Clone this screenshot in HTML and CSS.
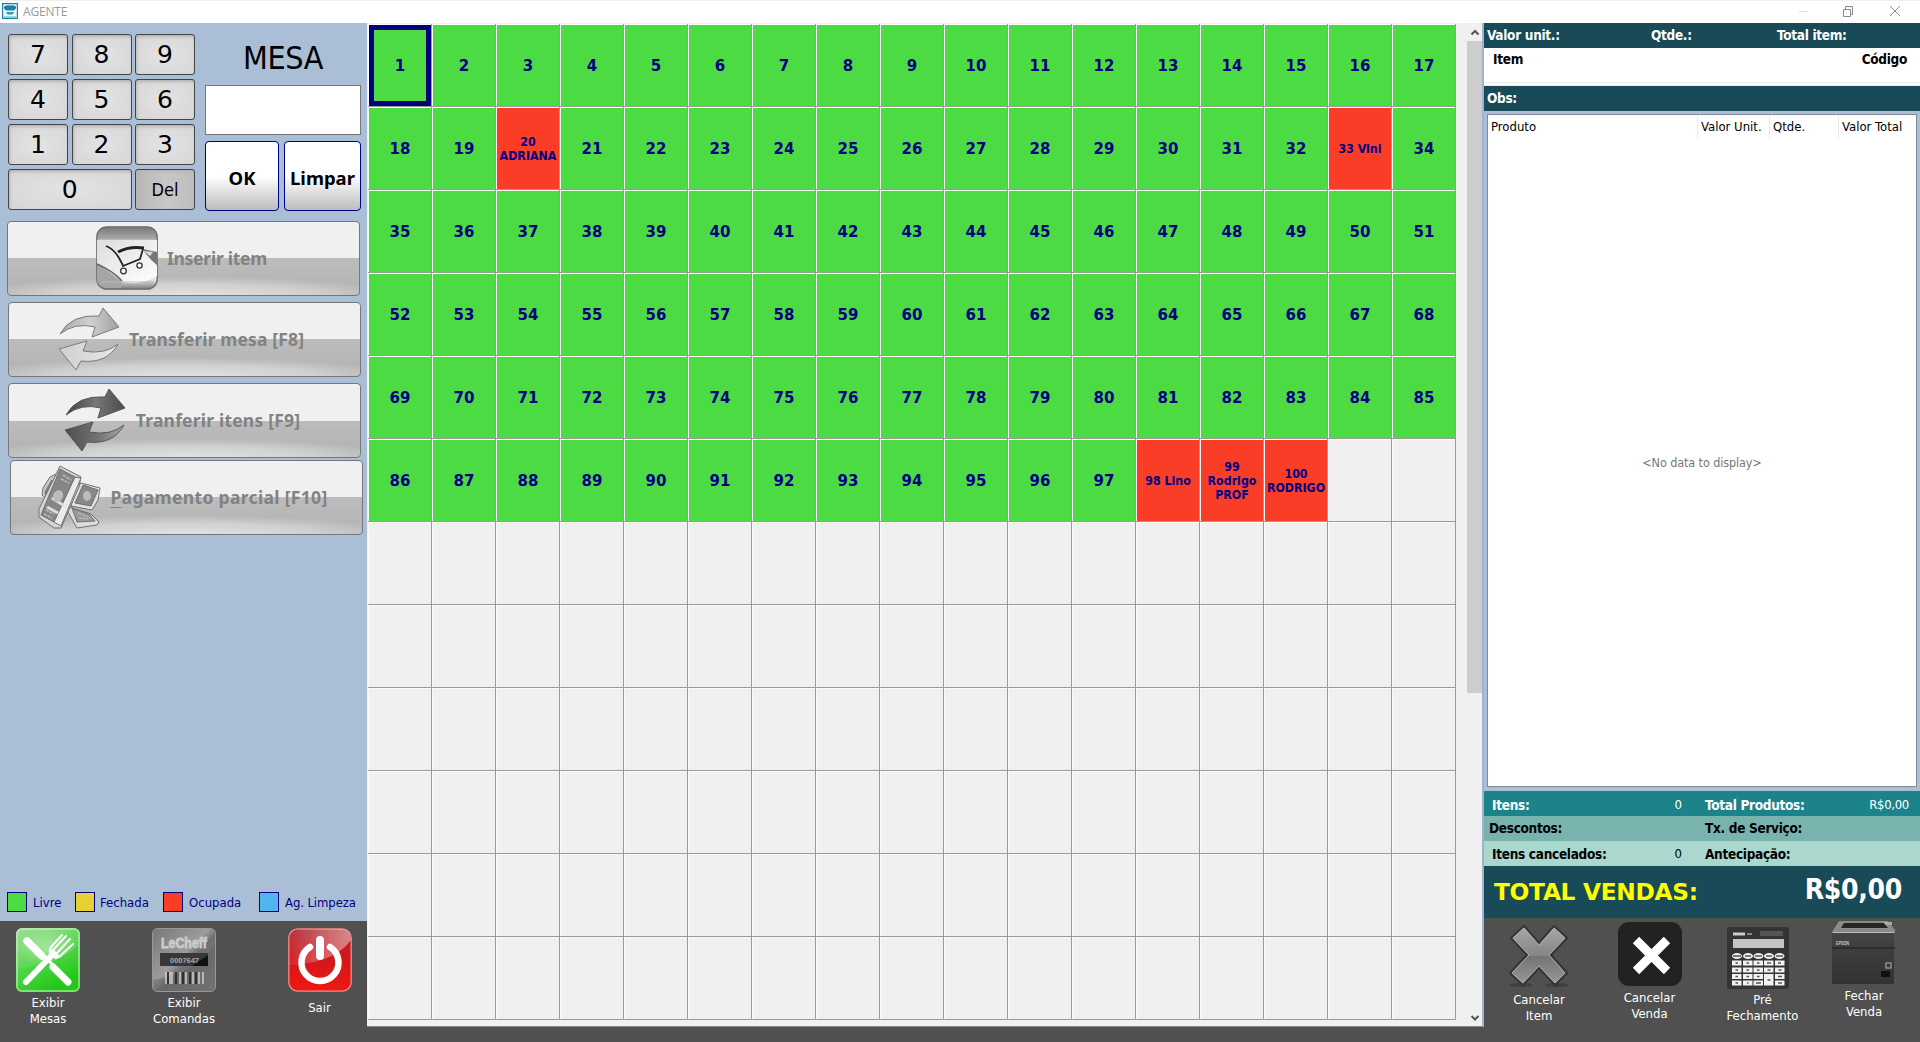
FILE: index.html
```html
<!DOCTYPE html>
<html lang="pt-BR">
<head>
<meta charset="utf-8">
<title>AGENTE</title>
<link rel="stylesheet" href="styles.css">
</head>
<body>
<header class="titlebar">
  <svg class="app-icon" width="16" height="16" viewBox="0 0 16 16"><rect x="0.5" y="0.5" width="15" height="15" fill="#e9f7fa" stroke="#1d83a3" stroke-width="1.4"/><path d="M2 3.5Q5 1.8 8 2.6Q11 1.8 14 3.5Q14.5 6 11.5 7.5H4.5Q1.500 6 2 3.500Z" fill="#1583a6"/><path d="M4 9h8l-1.500 2.500h-5z" fill="#3b96b2"/><path d="M2 14h12" stroke="#55b6cb"/></svg>
  <span class="app-name">AGENTE</span>
  <svg class="win-controls" width="110" height="14" viewBox="0 0 110 14" fill="none" stroke="#8a8a8a"><path d="M0 7.500h9" stroke="#e2e2e2"/><path d="M44.500 5.500h7v7h-7zM46.500 5.500v-3h7v8h-2"/><path d="M91 2l10 10M101 2l-10 10"/></svg>
</header>
<main class="workspace">
  <aside class="left">
    <section class="entry">
      <div class="keypad">
        <button class="key">7</button><button class="key">8</button><button class="key">9</button>
        <button class="key">4</button><button class="key">5</button><button class="key">6</button>
        <button class="key">1</button><button class="key">2</button><button class="key">3</button>
        <button class="key wide">0</button><button class="key del">Del</button>
      </div>
      <div class="mesa">
        <div class="mesa-title">MESA</div>
        <div class="mesa-input"></div>
        <div class="mesa-actions"><button class="act">OK</button><button class="act">Limpar</button></div>
      </div>
    </section>
    <nav class="commands">
      <button class="cmd c1">
        <svg width="62" height="64" viewBox="0 0 62 64"><defs><linearGradient id="cg" x2="0" y2="1"><stop offset="0" stop-color="#777"/><stop offset=".2" stop-color="#aaa"/><stop offset=".22" stop-color="#f4f4f4"/><stop offset=".85" stop-color="#e4e4e4"/><stop offset="1" stop-color="#777"/></linearGradient><linearGradient id="pg" x2="1" y2="1"><stop offset="0" stop-color="#ddd"/><stop offset="1" stop-color="#fff"/></linearGradient></defs><rect x=".8" y=".8" width="60.400" height="62.400" rx="10" fill="url(#cg)" stroke="#6c6c6c" stroke-width="1.300"/><path d="M1 37L25 55V62H10Q1 61 1 52Z" fill="#a5a5a5"/><path d="M1 37C16 45 22 49 27 56Q45 60 61 50V40L48 23L61 28V14H1Z" fill="url(#pg)"/><path d="M1 38C12 43 20 48 26 55" fill="none" stroke="#666" stroke-width="1.400"/><path d="M47 23l14 3v13Q51 31 47 23Z" fill="#777"/><path d="M48 25l9 1-3 4z" fill="#ddd"/><path d="M10 20Q18 23 23 32T27 40L44 33L47 23" fill="none" stroke="#252525" stroke-width="1.800"/><path d="M22 26Q33 20 48 22" fill="none" stroke="#222" stroke-width="3"/><circle cx="27.500" cy="45" r="2.800" fill="#fff" stroke="#333" stroke-width="1.300"/><circle cx="43.500" cy="39.500" r="2.600" fill="#fff" stroke="#333" stroke-width="1.300"/><path d="M5 56h52" stroke="#bbb"/></svg>
        <span>Inserir item</span>
      </button>
      <button class="cmd c2">
        <svg width="62" height="64" viewBox="0 0 62 64"><defs><linearGradient id="a1" x2="1"><stop offset="0" stop-color="#a8a8a8"/><stop offset=".5" stop-color="#d0d0d0"/><stop offset="1" stop-color="#a0a0a0"/></linearGradient><linearGradient id="a2" x2="1"><stop offset="0" stop-color="#cfcfcf"/><stop offset="1" stop-color="#e8e8e8"/></linearGradient></defs><g stroke="#7b7b7b" stroke-linejoin="round"><path d="M2 27Q13 7 41 9L45 1L61 20L34 30L37 20Q17 15 2 27Z" fill="url(#a1)"/><path d="M60 37Q49 57 23 54L18 63L1 42L29 34L25 44Q47 48 60 37Z" fill="url(#a2)"/></g></svg>
        <span>Transferir mesa [F8]</span>
      </button>
      <button class="cmd c3">
        <svg width="62" height="64" viewBox="0 0 62 64"><defs><linearGradient id="b1" x2="1"><stop offset="0" stop-color="#424242"/><stop offset=".5" stop-color="#777"/><stop offset="1" stop-color="#4b4b4b"/></linearGradient><linearGradient id="b2" x2="1"><stop offset="0" stop-color="#4c4c4c"/><stop offset=".6" stop-color="#777"/><stop offset="1" stop-color="#aaa"/></linearGradient></defs><g stroke="#555" stroke-linejoin="round"><path d="M2 27Q13 7 41 9L45 1L61 20L34 30L37 20Q17 15 2 27Z" fill="url(#b1)"/><path d="M60 37Q49 57 23 54L18 63L1 42L29 34L25 44Q47 48 60 37Z" fill="url(#b2)"/></g></svg>
        <span>Tranferir itens [F9]</span>
      </button>
      <button class="cmd c4">
        <svg width="64" height="64" viewBox="0 0 64 64"><g stroke="#6f6f6f" stroke-linejoin="round"><path d="M5 23L12 12L20 8L13 38L4 30Z" fill="#c8c8c8"/><path d="M7 27L14 15L15 22L9 34Z" fill="#888"/><path d="M31 42L53 49L61 57L59 60L39 63L30 47Z" fill="#ddd"/><path d="M34 43L51 49L57 56L39 57Z" fill="#999"/><path d="M43 18L62 23L60 35L54 45L33 41L36 28Z" fill="#e2e2e2"/><path d="M45 20L60 25L53 41L37 38Z" fill="#888"/><path d="M22 1L43 12L41 22L23 63L16 63L1 52V44Z" fill="#d6d6d6"/><path d="M22 4L37 12L16 57L3 50Z" fill="#868686"/><path d="M37 12L43 13L23 61L16 57Z" fill="#eaeaea"/></g><path d="M14 33L25 40M9 42L20 48" stroke="#ddd" stroke-width="3"/><ellipse cx="20" cy="31" rx="5" ry="6" fill="#bcbcbc" transform="rotate(25 20 31)"/><path d="M25 10l8 5M23 14l8 4M6 49l8 4M8 45l8 4" stroke="#bbb" stroke-width="1.600" stroke-dasharray="3 1"/><ellipse cx="49" cy="31" rx="4" ry="5" fill="#bbb"/><path d="M40 48l12 5M41 53l9 1" stroke="#ccc" stroke-dasharray="3 1"/></svg>
        <span><u>P</u>agamento parcial [F10]</span>
      </button>
    </nav>
    <div class="legend">
      <span class="lg livre"><i></i>Livre</span><span class="lg fechada"><i></i>Fechada</span><span class="lg ocupada"><i></i>Ocupada</span><span class="lg limpeza"><i></i>Ag. Limpeza</span>
    </div>
    <footer class="tools left-tools">
      <div class="tool t1">
        <svg width="64" height="64" viewBox="0 0 64 64"><defs><linearGradient id="gg" x2=".5" y2="1"><stop offset="0" stop-color="#9bdc94"/><stop offset=".5" stop-color="#5bd651"/><stop offset="1" stop-color="#1fc915"/></linearGradient><radialGradient id="gl"><stop offset="0" stop-color="#fff" stop-opacity=".4"/><stop offset="1" stop-color="#fff" stop-opacity=".05"/></radialGradient></defs><rect width="64" height="64" rx="6" fill="url(#gg)"/><path d="M0 40Q45 38 64 14V6Q64 0 58 0H6Q0 0 0 6Z" fill="url(#gl)"/><rect x="1" y="1" width="62" height="62" rx="5" fill="none" stroke="#d5f5cf" stroke-opacity=".5" stroke-width="2"/><g stroke="#fff" stroke-linecap="round" fill="none"><path d="M11 13L26 28" stroke-width="7.500"/><path d="M37 39L52 54" stroke-width="7"/><path d="M27 27L39 39" stroke-width="3"/><path d="M10 54L36 27" stroke-width="6"/><path d="M34 21Q32 30 43 29L57 16M38 21L50 8M41 25L54 11M34 20L46 7" stroke-width="1.900"/><path d="M36 24l4 4" stroke-width="6"/></g></svg>
        <span>Exibir<br>Mesas</span>
      </div>
      <div class="tool t2">
        <svg width="64" height="64" viewBox="0 0 64 64"><defs><linearGradient id="sg" x2="1" y2="1"><stop offset="0" stop-color="#777"/><stop offset=".45" stop-color="#9c9c9c"/><stop offset=".55" stop-color="#707070"/><stop offset="1" stop-color="#858585"/></linearGradient></defs><rect x=".500" y=".500" width="63" height="63" rx="5" fill="url(#sg)" stroke="#999"/><path d="M1 52Q45 45 63 15V58Q63 63 58 63H6Q1 63 1 58Z" fill="#5d5d5d" opacity=".45"/><rect x="8" y="25" width="48" height="13" fill="#383838"/><path d="M40 38L56 27V38Z" fill="#111"/><text x="9" y="20" class="lc" textLength="46" lengthAdjust="spacingAndGlyphs">LeCheff</text><text x="18" y="35" class="num" textLength="29" lengthAdjust="spacingAndGlyphs">0007647</text><path d="M14 44V56M18 44V56M20 44V56M28 44V56M34 44V56M41 44V56M47 44V56M51 44V56" stroke="#ddd" stroke-width="1.300"/><path d="M16 44V56M24 44V56M31 44V56M38 44V56M44 44V56" stroke="#222" stroke-width="1.600"/></svg>
        <span>Exibir<br>Comandas</span>
      </div>
      <div class="tool t3">
        <svg width="64" height="64" viewBox="0 0 64 64"><defs><linearGradient id="rg" x2="0" y2="1"><stop offset="0" stop-color="#ae2a30"/><stop offset=".5" stop-color="#d3171c"/><stop offset="1" stop-color="#f01812"/></linearGradient><linearGradient id="rh" x2="1"><stop offset="0" stop-color="#fff" stop-opacity=".05"/><stop offset="1" stop-color="#fff" stop-opacity=".45"/></linearGradient></defs><rect x=".800" y=".800" width="62.400" height="62.400" rx="9" fill="url(#rg)" stroke="#f18b87" stroke-width="1.300"/><path d="M1 37Q45 36 63 12Q62 1 54 1H10Q1 1 1 10Z" fill="url(#rh)"/><g stroke="#fff" fill="none" stroke-linecap="round"><path d="M32 12V28" stroke-width="8"/><path d="M22 19A18.500 18.500 0 1 0 42 19" stroke-width="6.500"/></g></svg>
        <span>Sair</span>
      </div>
    </footer>
  </aside>

  <section class="board">
    <div class="grid" id="grid"></div>
    <div class="scroll">
      <svg width="15" height="17" viewBox="0 0 15 17"><path d="M4.500 10.500L8 7l3.500 3.500" fill="none" stroke="#555" stroke-width="2"/></svg>
      <div class="thumb"></div>
      <svg class="down" width="15" height="17" viewBox="0 0 15 17"><path d="M4.500 7L8 10.500L11.500 7" fill="none" stroke="#555" stroke-width="2"/></svg>
    </div>
  </section>

  <aside class="right">
    <div class="bar head"><b>Valor unit.:</b><b>Qtde.:</b><b>Total item:</b></div>
    <div class="item"><b>Item</b><b>Código</b></div>
    <div class="bar"><b>Obs:</b></div>
    <div class="table-wrap"><div class="table">
      <div class="thead"><span>Produto</span><span>Valor Unit.</span><span>Qtde.</span><span class="num-col">Valor Total</span></div>
      <div class="empty">&lt;No data to display&gt;</div>
    </div></div>
    <div class="sum s1"><b>Itens:</b><span>0</span><b>Total Produtos:</b><span>R$0,00</span></div>
    <div class="sum s2"><b>Descontos:</b><span></span><b>Tx. de Serviço:</b><span></span></div>
    <div class="sum s3"><b>Itens cancelados:</b><span>0</span><b>Antecipação:</b><span></span></div>
    <div class="total"><b class="total-label">TOTAL VENDAS:</b><b class="total-value">R$0,00</b></div>
    <footer class="tools right-tools">
      <div class="tool r1">
        <svg width="64" height="66" viewBox="0 0 64 66"><defs><linearGradient id="xg" x2="0" y2="1"><stop offset="0" stop-color="#a8a8a8"/><stop offset=".5" stop-color="#858585"/><stop offset=".52" stop-color="#747474"/><stop offset="1" stop-color="#999"/></linearGradient></defs><ellipse cx="14" cy="62" rx="12" ry="2" fill="#404040"/><ellipse cx="50" cy="62" rx="12" ry="2" fill="#404040"/><path d="M17 3L32 20L47 3L60 15L44 32L60 50L48 62L32 45L16 62L3 50L20 32L4 15Z" fill="url(#xg)" stroke="#333" stroke-width="2" stroke-linejoin="round"/><path d="M17 5L32 22L47 5L58 15L42 32L58 50L48 60L32 43L16 60L5 50L22 32L6 15Z" fill="none" stroke="#b5b5b5" stroke-width=".800"/></svg>
        <span>Cancelar<br>Item</span>
      </div>
      <div class="tool r2">
        <svg width="64" height="64" viewBox="0 0 64 64"><rect width="64" height="64" rx="11" fill="#222"/><path d="M18 18L49 49M49 18L18 49" stroke="#fff" stroke-width="9"/></svg>
        <span>Cancelar<br>Venda</span>
      </div>
      <div class="tool r3">
        <svg width="64" height="62" viewBox="0 0 64 62"><rect x="1" width="62" height="62" rx="3" fill="#343434"/><rect x="34" y="4" width="23" height="5" fill="#555"/><path d="M7 7h12" stroke="#ccc" stroke-width="3"/><path d="M21 7h5" stroke="#888" stroke-width="2"/><rect x="7" y="12" width="51" height="9" fill="#c4c4c4"/><g fill="#eee"><ellipse cx="11" cy="29" rx="5" ry="3"/><ellipse cx="22" cy="29" rx="5" ry="3"/><ellipse cx="32.500" cy="29" rx="5" ry="3"/><ellipse cx="43" cy="29" rx="5" ry="3"/><ellipse cx="53.500" cy="29" rx="5" ry="3"/></g><path d="M6 36h9.500M17 36h9.500M27.500 36h9.500M38 36h9.500M49 36h9.500M6 43h9.500M17 43h9.500M27.500 43h9.500M38 43h9.500M49 43h9.500M6 49.500h9.500M17 49.500h9.500M27.500 49.500h9.500M49 49.500h9.500M6 56h9.500M17 56h9.500M27.500 56h9.500M49 56h9.500" stroke="#f2f2f2" stroke-width="5"/><path d="M38 47h9.500v11.500H38z" fill="#f2f2f2"/><path d="M9.500 36h2.500M20.500 36h2.500M31 36h2.500M41 36h4M52 36h3M9.500 43h2.500M20.500 43h2.500M31 43h2.500M41.500 43h3M52.500 43h3M9.500 49.500h2.500M20.500 49.500h2.500M31 49.500h2.500M52 49.500h4M9.500 56h2.500M21 56h1.500M30 56h5M52 56h4M41.500 53h3M7 29h8M19 29h6M29 29h7M40 29h6M50 29h7" stroke="#555" stroke-width="1.600"/></svg>
        <span>Pré<br>Fechamento</span>
      </div>
      <div class="tool r4">
        <svg width="64" height="64" viewBox="0 0 64 64"><defs><linearGradient id="eg" x2="0" y2="1"><stop offset="0" stop-color="#484848"/><stop offset="1" stop-color="#323232"/></linearGradient></defs><path d="M0 11L7 1H52L62 11V63H0Z" fill="url(#eg)"/><path d="M0 11L7 0H56L63 9V12H0Z" fill="#8a8a8a"/><path d="M12 2H52L56 7H9Z" fill="#262626"/><path d="M51 1h9v3h-6z" fill="#aaa"/><path d="M1 11.500H62" stroke="#bbb"/><path d="M0 27H63" stroke="#282828" stroke-width="1.500"/><text x="4" y="24" class="ep" textLength="13" lengthAdjust="spacingAndGlyphs">EPSON</text><rect x="49" y="50" width="9" height="6" fill="#111"/><rect x="54" y="42" width="5" height="5" fill="none" stroke="#999" stroke-width="1.300"/></svg>
        <span>Fechar<br>Venda</span>
      </div>
    </footer>
  </aside>
</main>
<script src="script.js"></script>
</body>
</html>
```
FILE: styles.css
```css
* { box-sizing: border-box; }
body { margin: 0; width: 1920px; height: 1042px; overflow: hidden; background: #fff; font-family: "DejaVu Sans Condensed", "DejaVu Sans", sans-serif; font-stretch: condensed; font-size: 13px; color: #000; display: flex; flex-direction: column; }
button { font: inherit; color: inherit; padding: 0; display: flex; align-items: center; justify-content: center; }
svg { display: block; flex: none; }
.titlebar { height: 23px; display: flex; align-items: center; padding: 0 0 2px 2px; border-top: 1px solid #f0f0f0; }
.app-name { font-family: "Open Sans", sans-serif; font-stretch: normal; font-size: 12px; color: #999; margin-left: 5px; letter-spacing: -0.2px; }
.win-controls { margin-left: auto; margin-right: 11px; }
.workspace { height: 1019px; display: grid; grid-template-columns: 367px 1117px 436px; background: #505050; }

.left { background: #aabfd6; display: flex; flex-direction: column; height: 1019px; }
.entry { display: flex; padding: 11px 0 0 8px; height: 198px; }
.keypad { display: grid; grid-template-columns: 60px 60px 60px; grid-template-rows: repeat(4, 41px); column-gap: 3.5px; row-gap: 4px; width: 187px; }
.key { border: 1px solid #444; border-radius: 3px; background: radial-gradient(#e3e3e3, #d6d6d6); box-shadow: inset 1px 2px 3px #b5b5b5; font-family: "DejaVu Sans", sans-serif; font-stretch: normal; font-size: 25px; padding-bottom: 1px; }
.key.wide { grid-column: span 2; }
.key.del { background: linear-gradient(90deg, #b5b5b5, #c8c8c8, #bdbdbd); font-family: inherit; font-stretch: condensed; font-size: 18px; padding: 0; }
.mesa { margin-left: 10px; width: 156px; }
.mesa-title { font-size: 32px; height: 51px; line-height: 49px; text-align: center; letter-spacing: -0.4px; }
.mesa-input { height: 50px; background: #fff; border: 1px solid #777; }
.mesa-actions { display: grid; grid-template-columns: 74px 77px; gap: 5px; margin-top: 6px; height: 70px; }
.act { border: 1px solid #000085; border-radius: 4px; background: linear-gradient(#fff 50%, #bcbcbc); font: bold 18.500px "Noto Sans", sans-serif; padding-top: 2px; }

.commands { height: 315px; }
.cmd { width: 353px; height: 75px; border: 1px solid #777; border-radius: 4px; background: radial-gradient(ellipse 62% 52% at 50% 100%, #e2e2e2, #d0d0d0 60%, transparent) 0 100% / 100% 50% no-repeat, linear-gradient(#f0f0f0 50%, #bcbcbc 50%, #b2b2b2); font: bold 17.500px "Noto Sans", sans-serif; color: #828282; gap: 9px; padding-bottom: 2px; }
.cmd u { text-underline-offset: 3px; text-decoration-thickness: 1px; }
.c1 { margin: 0 0 6px 7px; padding-right: 4px; letter-spacing: -0.25px; }
.c2 { margin: 0 0 6px 8px; padding-right: 7px; letter-spacing: 0.13px; }
.c3 { margin: 0 0 2px 8px; padding-right: 5px; gap: 10px; letter-spacing: 0.2px; }
.c4 { margin: 0 0 0 10px; padding-right: 7px; gap: 8px; letter-spacing: 0.33px; }

.legend { flex: 1; display: flex; align-items: flex-end; padding: 0 0 9px 7px; color: #000080; }
.lg { display: flex; align-items: center; gap: 6px; white-space: nowrap; }
.lg i { width: 20px; height: 20px; border: 1px solid #000080; }
.livre { width: 68px; }
.fechada { width: 88px; gap: 5px; }
.ocupada { width: 96px; }
.limpeza { letter-spacing: -0.1px; }
.livre i { background: #4cdb43; }
.fechada i { background: #e6d135; }
.ocupada i { background: #f93d26; }
.limpeza i { background: #51b5ee; }

.tools { display: flex; background: #505050; color: #fff; text-align: center; line-height: 16px; }
.left-tools { height: 121px; }
.tool { display: flex; flex-direction: column; align-items: center; gap: 3px; }
.t1 { width: 96px; padding-top: 7px; }
.t2 { width: 176px; padding-top: 7px; }
.t3 { width: 95px; padding-top: 7px; gap: 8px; }
.lc { font: bold 14.500px "Liberation Sans", sans-serif; fill: #ccc; stroke: #ccc; stroke-width: 0.8px; }
.num { font: bold 8px "Liberation Sans", sans-serif; fill: #aaa; }
.ep { font: bold 4.500px "Liberation Sans", sans-serif; fill: #ccc; }

.board { background: #f0f0f0; height: 1004px; display: flex; border-right: 2px solid #a0b4cb; border-bottom: 1px solid #888; }
.grid { display: grid; grid-template-columns: repeat(17, 64px); grid-template-rows: repeat(12, 83px); padding: 1px 0 0 1px; }
.cell { border-right: 1px solid #9a9a9a; border-bottom: 1px solid #9a9a9a; display: flex; align-items: center; justify-content: center; text-align: center; font-family: "DejaVu Sans", sans-serif; font-stretch: normal; font-weight: bold; color: #000080; font-size: 15px; padding: 2px 0 0 1px; box-shadow: inset 1px 1px #fbfbfb; }
.free { background: #4cdb43; }
.busy { background: #f93d26; font-family: "DejaVu Sans Condensed", "DejaVu Sans", sans-serif; font-stretch: condensed; font-size: 12.300px; line-height: 14px; }
.selected { outline: 5px solid #000080; outline-offset: -6px; }
.scroll { width: 15px; margin-left: 11px; padding-top: 1px; display: flex; flex-direction: column; }
.thumb { background: #cdcdcd; height: 652px; }
.down { margin-top: auto; }

.right { background: #aabfd6; height: 1019px; display: flex; flex-direction: column; font-size: 13px; }
.right b { font-size: 13.500px; letter-spacing: -0.3px; white-space: nowrap; }
.bar { height: 25px; background: #184a57; color: #fff; display: flex; align-items: center; padding: 0 3px 2px; }
.head { display: grid; grid-template-columns: 164px 126px 1fr; }
.item { height: 38px; background: #fff; display: flex; justify-content: space-between; padding: 3px 13px 0 9px; border-bottom: 4px double #eee; }
.table-wrap { height: 680px; padding: 3px 3px 4px; }
.table { height: 673px; background: #fff; border: 1px solid #7f8b99; display: flex; flex-direction: column; }
.thead { display: grid; grid-template-columns: 210px 72px 69px 1fr; height: 23px; align-items: center; }
.thead span { padding-left: 3px; border-right: 1px solid #e8e8e8; height: 23px; line-height: 23px; white-space: nowrap; }
.thead .num-col { border: 0; }
.empty { text-align: center; color: #777; margin-top: 317px; font-size: 12.500px; letter-spacing: -0.1px; }
.sum { height: 25px; display: grid; grid-template-columns: 171px 19px 142px 1fr; padding: 1px 11px 0 8px; align-items: center; }
.sum span { text-align: right; }
.sum b:nth-child(3) { padding-left: 23px; }
.s1 { background: #1d838b; color: #fff; padding-top: 2px; }
.s1 span:last-child { letter-spacing: -0.3px; }
.s2 { background: #79b3ae; padding: 0 11px 1px 5px; grid-template-columns: 174px 19px 142px 1fr; }
.s3 { background: #aad7ce; padding-top: 0; }
.total { height: 52px; background: #184a57; display: flex; justify-content: space-between; align-items: center; padding: 0 18px 1px 10px; }
.right .total-label { color: #ff0; font: bold 23.300px "DejaVu Sans", sans-serif; font-stretch: normal; }
.right .total-value { color: #fff; font-size: 28px; padding-bottom: 4px; }
.right-tools { height: 124px; padding-top: 1px; }
.r1 { width: 110px; padding-top: 4px; gap: 3px; }
.r2 { width: 111px; padding-top: 3px; gap: 4px; }
.r3 { width: 115px; padding-top: 8px; gap: 3px; }
.r3 svg { margin-left: -10px; }
.r4 { width: 88px; padding-top: 2px; gap: 3px; }
```
FILE: script.js
```js
const COLS = 17, ROWS = 12, TABLES = 100;
const occupied = { 20: "ADRIANA", 33: "Vini", 98: "Lino", 99: "Rodrigo PROF", 100: "RODRIGO" };
const grid = document.getElementById("grid");
for (let n = 1; n <= COLS * ROWS; n++) {
  const cell = document.createElement("div");
  cell.className = "cell";
  if (n <= TABLES) {
    cell.classList.add(occupied[n] ? "busy" : "free");
    cell.textContent = occupied[n] ? n + " " + occupied[n] : n;
  }
  if (n === 1) cell.classList.add("selected");
  grid.appendChild(cell);
}
```
